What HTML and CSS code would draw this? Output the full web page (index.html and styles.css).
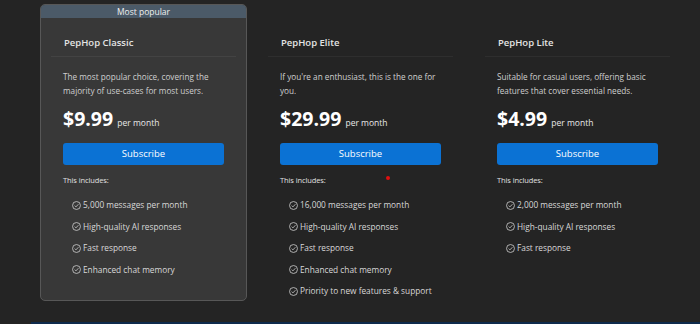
FILE: index.html
```html
<!DOCTYPE html>
<html lang="en">
<head>
  <meta charset="UTF-8">
  <meta name="viewport" content="width=device-width, initial-scale=1.0">
  <title>PepHop Plans</title>
  <link rel="stylesheet" href="styles.css">
</head>
<body>
  <div class="pricing">
    <div class="plan featured">
      <div class="plan-badge">Most popular</div>
      <div class="plan-head">PepHop Classic</div>
      <div class="plan-body">
        <p class="plan-desc">The most popular choice, covering the majority of use-cases for most users.</p>
        <div class="plan-price"><span class="amount">$9.99</span> <span class="period">per month</span></div>
        <button class="subscribe-button">Subscribe</button>
        <p class="includes">This includes:</p>
        <ul class="features">
          <li><svg class="check" viewBox="0 0 10 10"><circle cx="5" cy="5" r="4.4"/><path d="M3 5.1l1.4 1.4 2.7-2.9"/></svg>5,000 messages per month</li>
          <li><svg class="check" viewBox="0 0 10 10"><circle cx="5" cy="5" r="4.4"/><path d="M3 5.1l1.4 1.4 2.7-2.9"/></svg>High-quality AI responses</li>
          <li><svg class="check" viewBox="0 0 10 10"><circle cx="5" cy="5" r="4.4"/><path d="M3 5.1l1.4 1.4 2.7-2.9"/></svg>Fast response</li>
          <li><svg class="check" viewBox="0 0 10 10"><circle cx="5" cy="5" r="4.4"/><path d="M3 5.1l1.4 1.4 2.7-2.9"/></svg>Enhanced chat memory</li>
        </ul>
      </div>
    </div>

    <div class="plan">
      <div class="plan-badge"></div>
      <div class="plan-head">PepHop Elite</div>
      <div class="plan-body">
        <p class="plan-desc">If you're an enthusiast, this is the one for you.</p>
        <div class="plan-price"><span class="amount">$29.99</span> <span class="period">per month</span></div>
        <button class="subscribe-button">Subscribe</button>
        <p class="includes">This includes:<span class="rec-dot"></span></p>
        <ul class="features">
          <li><svg class="check" viewBox="0 0 10 10"><circle cx="5" cy="5" r="4.4"/><path d="M3 5.1l1.4 1.4 2.7-2.9"/></svg>16,000 messages per month</li>
          <li><svg class="check" viewBox="0 0 10 10"><circle cx="5" cy="5" r="4.4"/><path d="M3 5.1l1.4 1.4 2.7-2.9"/></svg>High-quality AI responses</li>
          <li><svg class="check" viewBox="0 0 10 10"><circle cx="5" cy="5" r="4.4"/><path d="M3 5.1l1.4 1.4 2.7-2.9"/></svg>Fast response</li>
          <li><svg class="check" viewBox="0 0 10 10"><circle cx="5" cy="5" r="4.4"/><path d="M3 5.1l1.4 1.4 2.7-2.9"/></svg>Enhanced chat memory</li>
          <li><svg class="check" viewBox="0 0 10 10"><circle cx="5" cy="5" r="4.4"/><path d="M3 5.1l1.4 1.4 2.7-2.9"/></svg>Priority to new features &amp; support</li>
        </ul>
      </div>
    </div>

    <div class="plan">
      <div class="plan-badge"></div>
      <div class="plan-head">PepHop Lite</div>
      <div class="plan-body">
        <p class="plan-desc">Suitable for casual users, offering basic features that cover essential needs.</p>
        <div class="plan-price"><span class="amount">$4.99</span> <span class="period">per month</span></div>
        <button class="subscribe-button">Subscribe</button>
        <p class="includes">This includes:</p>
        <ul class="features">
          <li><svg class="check" viewBox="0 0 10 10"><circle cx="5" cy="5" r="4.4"/><path d="M3 5.1l1.4 1.4 2.7-2.9"/></svg>2,000 messages per month</li>
          <li><svg class="check" viewBox="0 0 10 10"><circle cx="5" cy="5" r="4.4"/><path d="M3 5.1l1.4 1.4 2.7-2.9"/></svg>High-quality AI responses</li>
          <li><svg class="check" viewBox="0 0 10 10"><circle cx="5" cy="5" r="4.4"/><path d="M3 5.1l1.4 1.4 2.7-2.9"/></svg>Fast response</li>
        </ul>
      </div>
    </div>
  </div>

  <div class="footer-strip"></div>
</body>
</html>
```

FILE: styles.css
```css
body {
  font-family: "Open Sans", "Noto Sans", sans-serif;
  margin: 0;
  padding: 0;
  background-color: #242424;
  color: #dcdcdc;
}

.pricing {
  display: grid;
  grid-template-columns: repeat(3, 207px);
  gap: 10px;
  padding: 4px 0 0 40px;
}

.plan {
  border: 1px solid transparent;
  border-radius: 5px;
  overflow: hidden;
  padding-bottom: 3px;
}

.plan.featured {
  background-color: #383838;
  border-color: #575757;
}

.plan-badge {
  height: 13px;
  line-height: 13px;
  font-size: 8.5px;
  text-align: center;
  color: #f0f0f0;
}

.featured .plan-badge {
  background-color: #4b5a68;
}

.plan-head {
  margin: 0 10px;
  padding: 18px 13px 6px;
  border-bottom: 1px solid #2e2e2e;
  font-size: 9.5px;
  line-height: 14px;
  font-weight: 600;
  color: #e4e4e4;
}

.featured .plan-head {
  border-bottom-color: #434343;
}

.plan-body {
  padding: 0 22px;
}

.plan-desc {
  margin: 13px 0 0;
  font-size: 8.2px;
  line-height: 13.5px;
  color: #cfcfcf;
}

.plan-price {
  margin-top: 8.5px;
  line-height: 26px;
}

.plan-price .amount {
  font-size: 19.5px;
  font-weight: 700;
  color: #fff;
}

.plan-price .period {
  font-size: 8.5px;
  color: #e8e8e8;
}

.subscribe-button {
  display: block;
  width: 100%;
  height: 22px;
  margin-top: 7px;
  padding: 0;
  background-color: #0b72d4;
  color: #fff;
  border: none;
  border-radius: 3px;
  font-family: inherit;
  font-size: 9.5px;
  cursor: pointer;
}

.includes {
  position: relative;
  margin: 9px 0 0;
  font-size: 7.5px;
  line-height: 12px;
  letter-spacing: -0.1px;
  color: #e0e0e0;
}

.rec-dot {
  position: absolute;
  left: 106px;
  top: 2px;
  width: 4px;
  height: 4px;
  border-radius: 50%;
  background-color: #e01010;
}

.features {
  list-style: none;
  margin: 13.5px 0 0;
  padding: 0 0 0 9px;
  display: flex;
  flex-direction: column;
  gap: 9.5px;
}

.features li {
  display: flex;
  align-items: center;
  gap: 2px;
  font-size: 8.3px;
  line-height: 12px;
  color: #d8d8d8;
}

.check {
  width: 9px;
  height: 9px;
  fill: none;
  stroke: #cfcfcf;
  stroke-width: 0.9;
}

.footer-strip {
  height: 6px;
  margin: 21px 0 0 31px;
  background-color: #0e2a4c;
}
```
